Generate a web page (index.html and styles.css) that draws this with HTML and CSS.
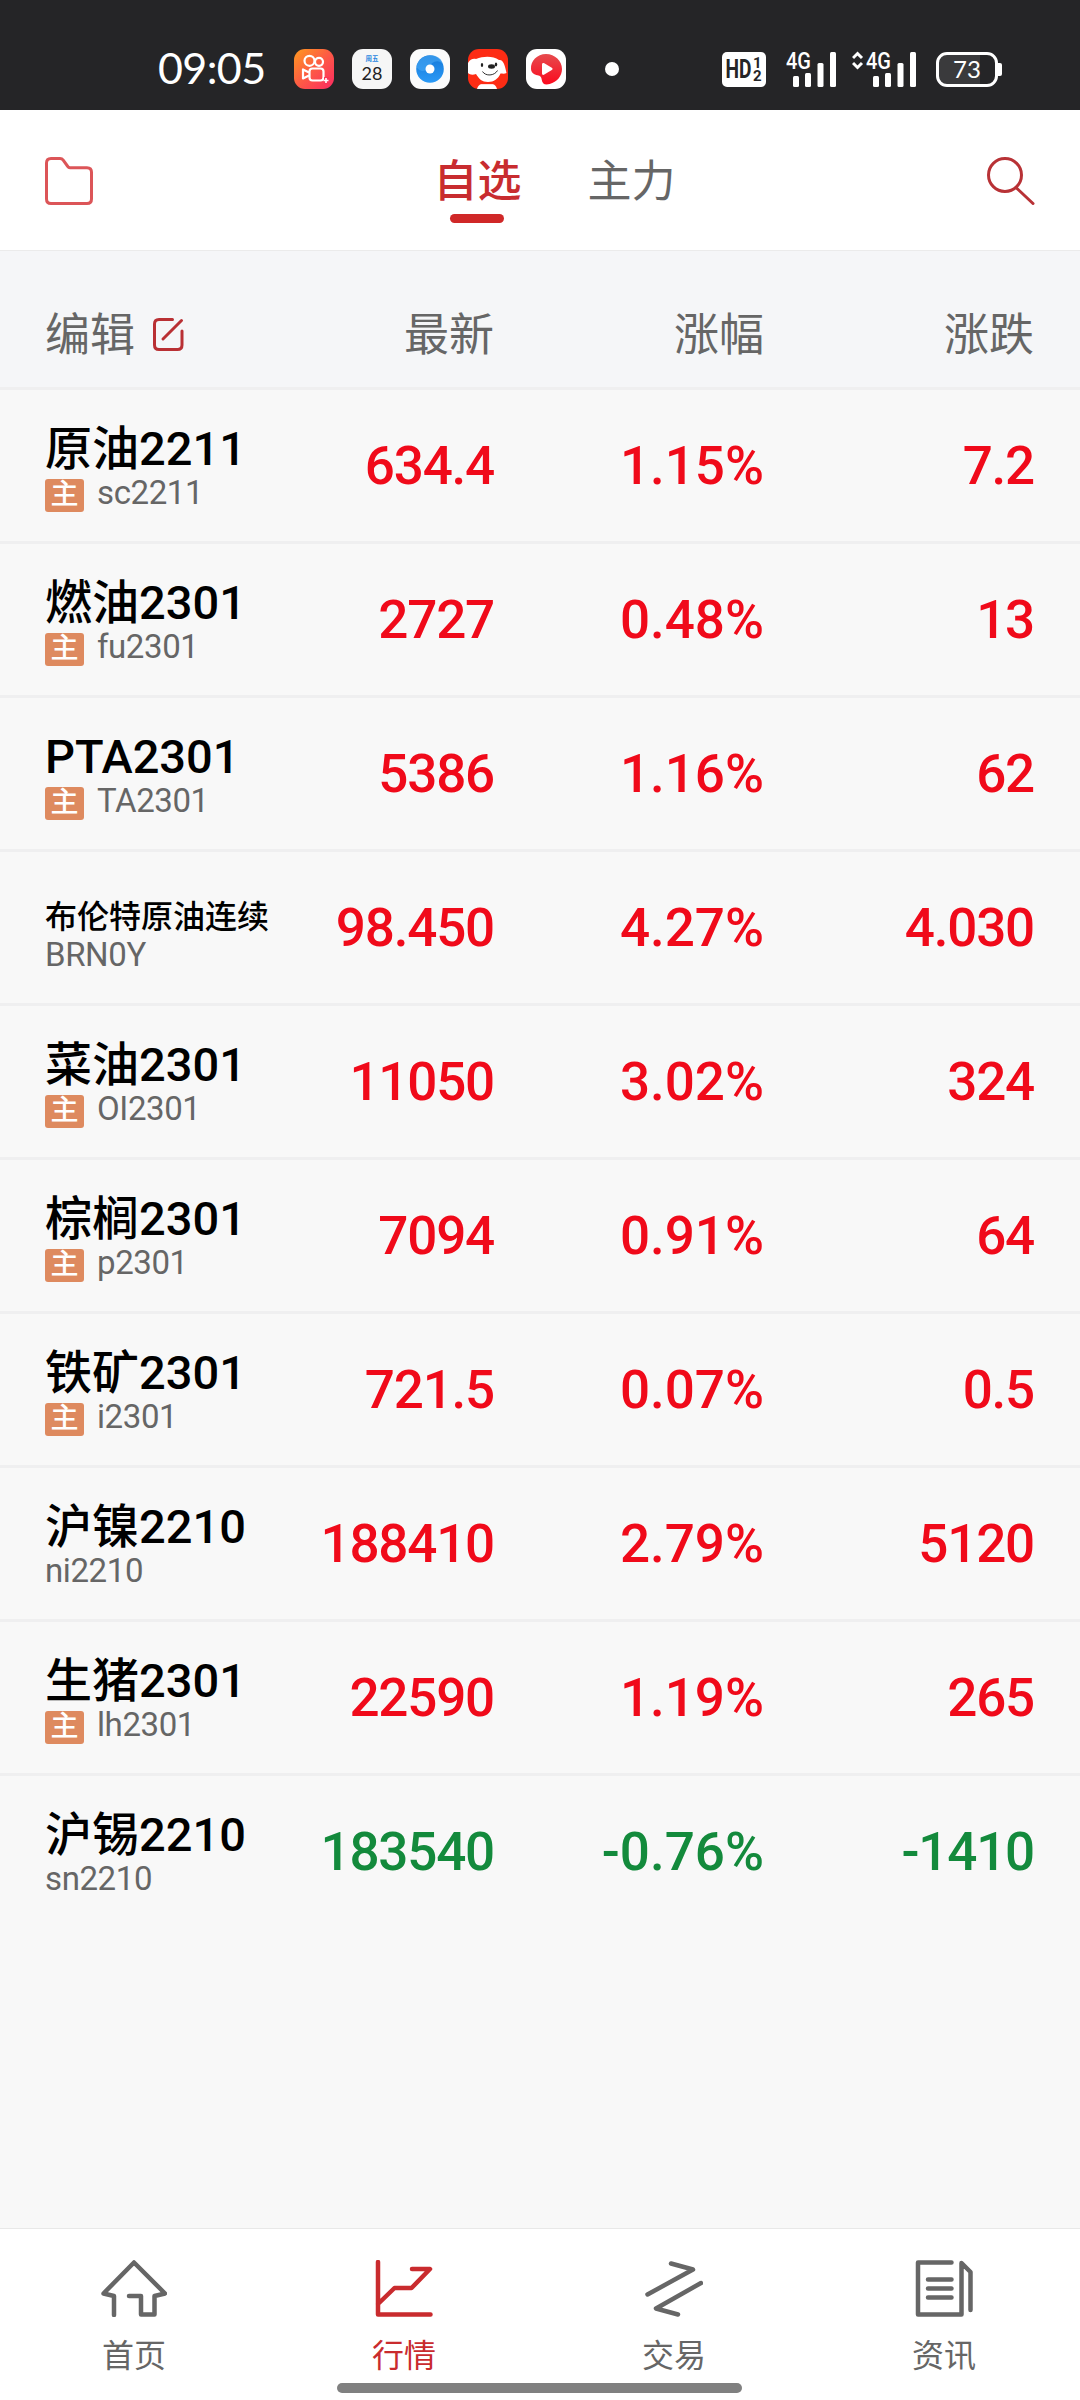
FILE: index.html
```html
<!DOCTYPE html>
<html lang="zh-CN">
<head>
    <meta charset="UTF-8">
    <meta name="viewport" content="width=device-width, initial-scale=1.0">
    <title>行情</title>
    <link rel="stylesheet" href="styles.css">
</head>
<body>

<div class="status-bar">
    <div class="time">09:05</div>
    <div class="apps">
        <svg class="app" viewBox="0 0 40 40">
            <defs>
                <linearGradient id="ks" x1="0" y1="0" x2="1" y2="1">
                    <stop offset="0" stop-color="#ff9a1f"/>
                    <stop offset="0.5" stop-color="#fd5a45"/>
                    <stop offset="1" stop-color="#fb2a62"/>
                </linearGradient>
            </defs>
            <rect width="40" height="40" rx="11" fill="url(#ks)"/>
            <g fill="none" stroke="#fff" stroke-width="2.2">
                <circle cx="15.5" cy="11.8" r="5"/>
                <circle cx="25" cy="12.8" r="4"/>
                <rect x="15.5" y="19.5" width="14" height="12" rx="3"/>
                <path d="M15 23.5l-6-3v9l6-3" stroke-linejoin="round"/>
            </g>
            <path d="M30 28h5v7h-5z" fill="#fb3558"/>
            <path d="M32 29v5M29.5 31.5h5" stroke="#fff" stroke-width="1.6"/>
        </svg>
        <div class="app calendar">
            <span class="weekday">周五</span>
            <span class="day">28</span>
        </div>
        <svg class="app" viewBox="0 0 40 40">
            <defs>
                <linearGradient id="bl" x1="0" y1="0" x2="0" y2="1">
                    <stop offset="0" stop-color="#1478d8"/>
                    <stop offset="1" stop-color="#2b9af6"/>
                </linearGradient>
            </defs>
            <rect width="40" height="40" rx="11" fill="#fbfbfb"/>
            <circle cx="20" cy="20" r="13.8" fill="url(#bl)"/>
            <path d="M6.5 18c2-14 23-16 26.5-3-6-6-12-1-15 4-3 4-8 4-11.5-1z" fill="#48a8f5" opacity="0.6"/>
            <circle cx="20" cy="20" r="4.5" fill="#fff"/>
        </svg>
        <svg class="app" viewBox="0 0 40 40">
            <rect width="40" height="40" rx="11" fill="#fd2c14"/>
            <path d="M9 40c1-3 2-4 4-5h12c2 1 3 2 4 5z" fill="#fff"/>
            <path d="M0 14c2-4 5-4.5 8-4 8-3 17-3 23 1 4-1 6 5 7.5 13-2 1-4 .5-6 .5C30 30 26 33 20 33S11 30 8 25c-3 1-6 1-8-1z" fill="#fff"/>
            <ellipse cx="23.5" cy="17.5" rx="3.5" ry="2.2" fill="#222"/>
            <ellipse cx="14" cy="16" rx="1.2" ry="2" fill="#222"/>
            <ellipse cx="28" cy="15.5" rx="1.2" ry="2" fill="#222"/>
            <path d="M14.5 22.5c3 5 12 4.500 15-1" fill="none" stroke="#333" stroke-width="1"/>
            <path d="M12 34.5h14" stroke="#fd2c14" stroke-width="1.3"/>
        </svg>
        <svg class="app" viewBox="0 0 40 40">
            <defs>
                <linearGradient id="rd" x1="0" y1="0" x2="0" y2="1">
                    <stop offset="0" stop-color="#e64b4e"/>
                    <stop offset="1" stop-color="#fb0a1e"/>
                </linearGradient>
            </defs>
            <rect width="40" height="40" rx="11" fill="#fff"/>
            <path d="M20 5C11 5 4.500 12 5 20c.3 4 3 5.500 6.500 6.200 3 .6 4 2 4.200 4.300.4 4 3 6 8 4.500C31 33 36 27 36 20 36 12 29 5 20 5z" fill="url(#rd)"/>
            <path d="M16 15.500c0-1.500 1-2 2.300-1.300l7.500 4.500c1 .7 1 1.700 0 2.400l-7.500 4.500c-1.300.7-2.300.2-2.300-1.300z" fill="#fff"/>
        </svg>
    </div>
    <div class="dot"></div>
    <div class="system">
        <svg class="hd" width="44" height="35" viewBox="0 0 44 35">
            <rect width="44" height="35" rx="5"/>
            <text x="3.5" y="26" textLength="26" lengthAdjust="spacingAndGlyphs" class="hd-text">HD</text>
            <text x="31" y="16" class="sim">1</text>
            <text x="31" y="29" class="sim">2</text>
        </svg>
        <svg class="signal" width="50" height="36" viewBox="0 0 50 36">
            <text x="0" y="17.5" textLength="25" lengthAdjust="spacingAndGlyphs" class="net">4G</text>
            <rect x="7" y="25" width="6" height="11" rx="1.5"/>
            <rect x="19" y="22" width="6" height="14" rx="1.5"/>
            <rect x="31.5" y="12" width="6" height="24" rx="1.5"/>
            <rect x="44" y="1" width="6" height="35" rx="1.5"/>
        </svg>
        <svg class="signal signal-data" width="64" height="36" viewBox="0 0 64 36">
            <path d="M1 7l4.500-4.500L10 7M1 12l4.500 4.500L10 12" class="arrows"/>
            <text x="14" y="17.5" textLength="25" lengthAdjust="spacingAndGlyphs" class="net">4G</text>
            <rect x="21" y="25" width="6" height="11" rx="1.5"/>
            <rect x="33" y="22" width="6" height="14" rx="1.5"/>
            <rect x="45.5" y="12" width="6" height="24" rx="1.5"/>
            <rect x="58" y="1" width="6" height="35" rx="1.5"/>
        </svg>
        <div class="battery">73</div>
        <div class="battery-cap"></div>
    </div>
</div>

<div class="top-bar">
    <svg class="folder" width="48" height="48" viewBox="0 0 48 48">
        <path d="M1.500 6q0-4.500 4.500-4.500h9q2 0 3.200 1.700l4.600 6.300q.7 1.200 2.200 1.200h17q4.500 0 4.500 4.500v26.800q0 4.500-4.500 4.500H6q-4.500 0-4.500-4.500z"/>
    </svg>
    <div class="tabs">
        <a class="tab active">自选</a>
        <a class="tab">主力</a>
    </div>
    <svg class="search" width="48" height="48" viewBox="0 0 48 48">
        <circle cx="18" cy="18" r="16.5"/>
        <path d="M29.500 31L46 46.500"/>
    </svg>
</div>

<div class="list-head">
    <div class="edit">
        编辑
        <svg width="31" height="33" viewBox="0 0 31 33">
            <path d="M19.500 1.500H6q-4.500 0-4.500 4.500v21q0 4.500 4.500 4.500h18.500q4.500 0 4.500-4.500V13"/>
            <path d="M10 21L28.500 2.500"/>
        </svg>
    </div>
    <div>最新</div>
    <div>涨幅</div>
    <div>涨跌</div>
</div>

<div class="list">
    <div class="row up">
        <div class="contract">
            <div class="name">原油2211</div>
            <div class="code"><span class="main">主</span>sc2211</div>
        </div>
        <div>634.4</div>
        <div class="percent">1.15%</div>
        <div>7.2</div>
    </div>
    <div class="row up">
        <div class="contract">
            <div class="name">燃油2301</div>
            <div class="code"><span class="main">主</span>fu2301</div>
        </div>
        <div>2727</div>
        <div class="percent">0.48%</div>
        <div>13</div>
    </div>
    <div class="row up">
        <div class="contract">
            <div class="name">PTA2301</div>
            <div class="code"><span class="main">主</span>TA2301</div>
        </div>
        <div>5386</div>
        <div class="percent">1.16%</div>
        <div>62</div>
    </div>
    <div class="row up">
        <div class="contract">
            <div class="name long">布伦特原油连续</div>
            <div class="code">BRN0Y</div>
        </div>
        <div>98.450</div>
        <div class="percent">4.27%</div>
        <div>4.030</div>
    </div>
    <div class="row up">
        <div class="contract">
            <div class="name">菜油2301</div>
            <div class="code"><span class="main">主</span>OI2301</div>
        </div>
        <div>11050</div>
        <div class="percent">3.02%</div>
        <div>324</div>
    </div>
    <div class="row up">
        <div class="contract">
            <div class="name">棕榈2301</div>
            <div class="code"><span class="main">主</span>p2301</div>
        </div>
        <div>7094</div>
        <div class="percent">0.91%</div>
        <div>64</div>
    </div>
    <div class="row up">
        <div class="contract">
            <div class="name">铁矿2301</div>
            <div class="code"><span class="main">主</span>i2301</div>
        </div>
        <div>721.5</div>
        <div class="percent">0.07%</div>
        <div>0.5</div>
    </div>
    <div class="row up">
        <div class="contract">
            <div class="name">沪镍2210</div>
            <div class="code">ni2210</div>
        </div>
        <div>188410</div>
        <div class="percent">2.79%</div>
        <div>5120</div>
    </div>
    <div class="row up">
        <div class="contract">
            <div class="name">生猪2301</div>
            <div class="code"><span class="main">主</span>lh2301</div>
        </div>
        <div>22590</div>
        <div class="percent">1.19%</div>
        <div>265</div>
    </div>
    <div class="row down">
        <div class="contract">
            <div class="name">沪锡2210</div>
            <div class="code">sn2210</div>
        </div>
        <div>183540</div>
        <div class="percent">-0.76%</div>
        <div>-1410</div>
    </div>
</div>

<div class="nav">
    <a class="nav-item">
        <svg width="66" height="57" viewBox="0 0 66 57">
            <path d="M13 55V36L2.500 33.500 33 2.500l31 31L53.500 36v18.500H40V36H28"/>
        </svg>
        首页
    </a>
    <a class="nav-item active">
        <svg width="58" height="57" viewBox="0 0 58 57">
            <path d="M3 2v52.500h52.500M3 44l16.500-16h17L55 9H37"/>
        </svg>
        行情
    </a>
    <a class="nav-item">
        <svg width="58" height="57" viewBox="0 0 58 57">
            <path d="M2.500 34.500L48 9.500 26 3.500M56 23L11 48.500l22 6"/>
        </svg>
        交易
    </a>
    <a class="nav-item">
        <svg width="58" height="57" viewBox="0 0 58 57">
            <path d="M36.500 2.500H3v52h43.500V3l9 9v38M13 19.500h23.500M13 28.500h23.500M13 37.500h23.500"/>
        </svg>
        资讯
    </a>
    <div class="home-indicator"></div>
</div>

</body>
</html>
```

FILE: styles.css
```css
body {
    margin: 0;
    width: 1080px;
    height: 2400px;
    display: flex;
    flex-direction: column;
    background-color: #f8f8f8;
    font-family: Roboto, "Noto Sans CJK SC", sans-serif;
    overflow: hidden;
}

svg {
    display: block;
    flex: none;
}

/* status bar */
.status-bar {
    height: 110px;
    box-sizing: border-box;
    padding: 28px 78px 0 158px;
    display: flex;
    align-items: center;
    background-color: #252527;
    color: #fff;
}

.status-bar > div {
    flex: none;
}

.time {
    width: 136px;
    padding-bottom: 3px;
    font-family: Lato, sans-serif;
    font-size: 43px;
    line-height: 50px;
    letter-spacing: -0.6px;
}

.apps {
    display: flex;
    gap: 18px;
}

.app {
    width: 40px;
    height: 40px;
}

.calendar {
    display: flex;
    flex-direction: column;
    align-items: center;
    border-radius: 11px;
    background-color: #f6f6f6;
}

.weekday {
    margin-top: 6px;
    font-size: 6.5px;
    line-height: 9px;
    font-weight: 700;
    color: #2a86e0;
}

.day {
    font-family: Lato, sans-serif;
    font-size: 18px;
    line-height: 19px;
    color: #222;
}

.dot {
    width: 14px;
    height: 14px;
    margin-left: 39px;
    border-radius: 50%;
    background-color: #fff;
}

.system {
    display: flex;
    align-items: center;
    margin-left: auto;
}

.hd {
    fill: #fff;
}

.hd-text {
    fill: #252527;
    font-size: 25px;
    font-weight: 700;
}

.sim {
    fill: #252527;
    font-size: 15px;
    font-weight: 700;
}

.signal {
    margin-left: 20px;
    fill: #fff;
}

.signal-data {
    margin-left: 16px;
}

.net {
    font-size: 23px;
    font-weight: 500;
}

.arrows {
    fill: none;
    stroke: #fff;
    stroke-width: 3;
}

.battery {
    width: 62px;
    height: 35px;
    box-sizing: border-box;
    margin-left: 20px;
    border: 3px solid #fff;
    border-radius: 11px;
    background: linear-gradient(to right, #3a3a3c 73%, #252527 73%);
    font-family: Lato, sans-serif;
    font-size: 24px;
    line-height: 28px;
    text-align: center;
}

.battery-cap {
    width: 4px;
    height: 13px;
    border-radius: 0 2px 2px 0;
    background-color: #fff;
}

/* title bar */
.top-bar {
    height: 141px;
    box-sizing: border-box;
    padding: 0 45px;
    border-bottom: 1px solid #ebebeb;
    display: flex;
    align-items: center;
    justify-content: space-between;
    background-color: #fff;
}

.top-bar svg {
    margin-top: 2px;
    fill: none;
    stroke-width: 3;
    stroke-linecap: round;
    stroke-linejoin: round;
}

.folder {
    stroke: #dc5558;
}

.search {
    stroke: #b83236;
}

.tabs {
    display: flex;
    gap: 66px;
    margin: 4px 0 0 29px;
}

.tab {
    position: relative;
    font-size: 44px;
    line-height: 64px;
    color: #666;
}

.tab.active {
    font-weight: 500;
    color: #c82c2f;
}

.tab.active::after {
    content: "";
    position: absolute;
    left: 16px;
    bottom: -9px;
    width: 54px;
    height: 9px;
    border-radius: 5px;
    background-color: #d02828;
}

/* quotes */
.list-head,
.row {
    display: grid;
    grid-template-columns: 239px 210px 270px 270px;
    align-items: center;
    padding: 0 46px 0 45px;
    border-bottom: 3px solid #efeff0;
    text-align: right;
    white-space: nowrap;
}

.list-head {
    height: 136px;
    background-color: #f5f6f8;
    color: #666;
    font-size: 45px;
    line-height: 72px;
}

.list-head > div {
    padding-top: 34px;
}

.edit {
    display: flex;
    align-items: center;
    gap: 18px;
}

.edit svg {
    margin-bottom: 3px;
    fill: none;
    stroke: #b93034;
    stroke-width: 3;
    stroke-linecap: round;
}

.list {
    flex: 1;
}

.row {
    height: 151px;
    font-size: 53px;
    font-weight: 500;
    letter-spacing: -1.2px;
}

.row:last-child {
    border-bottom: none;
}

.percent {
    letter-spacing: 0;
}

.up {
    color: #f00a1a;
}

.down {
    color: #138a3c;
}

.contract {
    text-align: left;
}

.name {
    height: 54px;
    font-size: 47px;
    line-height: 56px;
    letter-spacing: 0;
    color: #000;
}

.name.long {
    font-size: 32px;
    line-height: 68px;
}

.code {
    display: flex;
    height: 36px;
    font-size: 33px;
    font-weight: 400;
    line-height: 35px;
    letter-spacing: -0.4px;
    color: #666;
}

.main {
    width: 39px;
    height: 33px;
    margin: 4px 13px 0 0;
    border-radius: 3px;
    background-color: #de8a5f;
    color: #fff;
    font-size: 28px;
    font-weight: 500;
    line-height: 31px;
    letter-spacing: 0;
    text-align: center;
}

/* bottom navigation */
.nav {
    position: relative;
    height: 171px;
    display: flex;
    border-top: 1px solid #e8e8e8;
    background-color: #fff;
}

.nav-item {
    flex: 1;
    display: flex;
    flex-direction: column;
    align-items: center;
    padding: 31px 2px 0 0;
    color: #666;
    font-size: 32px;
    line-height: 78px;
}

.nav-item.active {
    color: #c92b2e;
}

.nav-item svg {
    fill: none;
    stroke: currentColor;
    stroke-width: 4.5;
    stroke-linecap: round;
    stroke-linejoin: round;
}

.home-indicator {
    position: absolute;
    left: 337px;
    bottom: 7px;
    width: 405px;
    height: 10px;
    border-radius: 5px;
    background-color: #808080;
}
```
